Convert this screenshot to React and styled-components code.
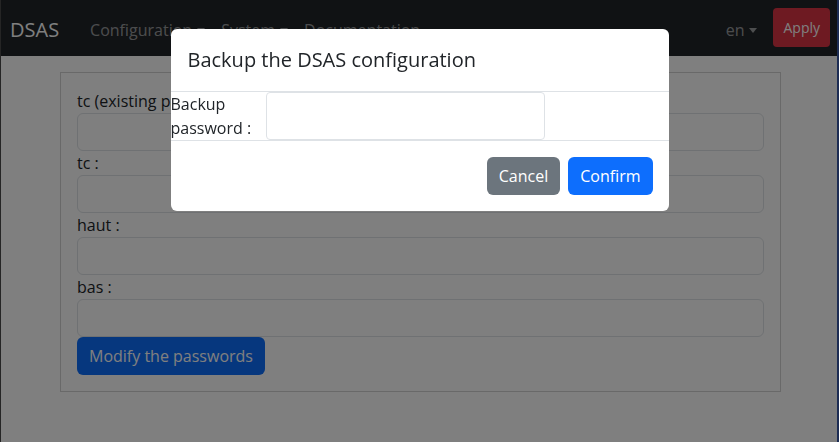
import React from "react";
import styled, { createGlobalStyle } from "styled-components";

const Global = createGlobalStyle`
  * { box-sizing: border-box; }
  html, body { margin: 0; padding: 0; }
  body {
    font-family: "Open Sans", "Noto Sans", sans-serif;
    font-size: 16px;
    line-height: 24px;
    color: #212529;
    background: #fff;
    height: 442px;
    overflow: hidden;
    border-right: 2px solid #3b5aa8;
    border-left: 1px solid #4a4a4a;
  }
`;

const Navbar = styled.nav`
  height: 56px;
  background: #212529;
  display: flex;
  align-items: center;
  padding: 0 7px 0 9px;
`;

const Brand = styled.div`
  font-size: 20px;
  color: #fff;
  margin-right: 23px;
  line-height: 30px;
  padding-top: 3px;
`;

const NavList = styled.ul`
  list-style: none;
  margin: 0;
  padding: 3px 0 0 0;
  display: flex;
  flex: 1;
  align-items: center;
`;

const NavItem = styled.li`
  color: rgba(255, 255, 255, 0.55);
  padding: 8px;
  margin-right: ${(p) => (p.$push ? "auto" : "0")};
  display: flex;
  align-items: center;
`;

const Caret = styled.span`
  display: inline-block;
  margin-left: 5px;
  border-top: 5px solid currentColor;
  border-left: 4px solid transparent;
  border-right: 4px solid transparent;
  margin-top: 2px;
`;

const ApplyButton = styled.button`
  font: inherit;
  font-size: 14px;
  margin-left: 8px;
  background: #dc3545;
  color: #fff;
  border: none;
  border-radius: 4px;
  height: 39px;
  padding: 0 10px;
  margin-top: -1px;
`;

const Main = styled.main`
  padding: 16px 56px 0 59px;
`;

const Card = styled.div`
  border: 1px solid rgba(0, 0, 0, 0.175);
  padding: 16px;
`;

const Label = styled.label`
  display: block;
  line-height: 24px;
`;

const Input = styled.input`
  display: block;
  width: 100%;
  height: 38px;
  border: 1px solid #dee2e6;
  border-radius: 6px;
  font: inherit;
  background: #fff;
`;

const Button = styled.button`
  font: inherit;
  color: #fff;
  background: ${(p) => p.$bg};
  border: none;
  border-radius: 6px;
  height: 38px;
  padding: 0 12px;
  margin: ${(p) => p.$margin || 0};
`;

const Backdrop = styled.div`
  position: fixed;
  inset: 0;
  background: rgba(0, 0, 0, 0.5);
`;

const ModalWrap = styled.div`
  position: fixed;
  inset: 0;
  padding-top: 29px;
  display: flex;
  justify-content: center;
  align-items: flex-start;
`;

const Modal = styled.div`
  width: 498px;
  background: #fff;
  border-radius: 6px;
  overflow: hidden;
`;

const ModalHeader = styled.div`
  padding: 16px 17px;
  border-bottom: 1px solid #dee2e6;
`;

const ModalTitle = styled.h5`
  margin: 0;
  font-size: 20px;
  font-weight: 400;
  line-height: 30px;
`;

const ModalBody = styled.div`
  display: flex;
  align-items: stretch;
  border-bottom: 1px solid #dee2e6;
`;

const BodyLabel = styled.label`
  width: 95px;
  line-height: 24px;
`;

const BodyInput = styled(Input)`
  width: 279px;
  height: auto;
  border-radius: 4px;
`;

const ModalFooter = styled.div`
  display: flex;
  justify-content: flex-end;
  padding: 12px;
`;

const fields = ["tc (existing password) :", "tc :", "haut :", "bas :"];

export default function App() {
  return (
    <>
      <Global />
      <Navbar>
        <Brand>DSAS</Brand>
        <NavList>
          <NavItem>Configuration<Caret /></NavItem>
          <NavItem>System<Caret /></NavItem>
          <NavItem $push>Documentation</NavItem>
          <NavItem>en<Caret /></NavItem>
        </NavList>
        <ApplyButton>Apply</ApplyButton>
      </Navbar>
      <Main>
        <Card>
          {fields.map((f) => (
            <div key={f}>
              <Label>{f}</Label>
              <Input type="password" />
            </div>
          ))}
          <Button $bg="#0d6efd">Modify the passwords</Button>
        </Card>
      </Main>
      <Backdrop />
      <ModalWrap>
        <Modal>
          <ModalHeader>
            <ModalTitle>Backup the DSAS configuration</ModalTitle>
          </ModalHeader>
          <ModalBody>
            <BodyLabel>Backup password :</BodyLabel>
            <BodyInput type="password" />
          </ModalBody>
          <ModalFooter>
            <Button $bg="#6c757d" $margin="4px">Cancel</Button>
            <Button $bg="#0d6efd" $margin="4px">Confirm</Button>
          </ModalFooter>
        </Modal>
      </ModalWrap>
    </>
  );
}
